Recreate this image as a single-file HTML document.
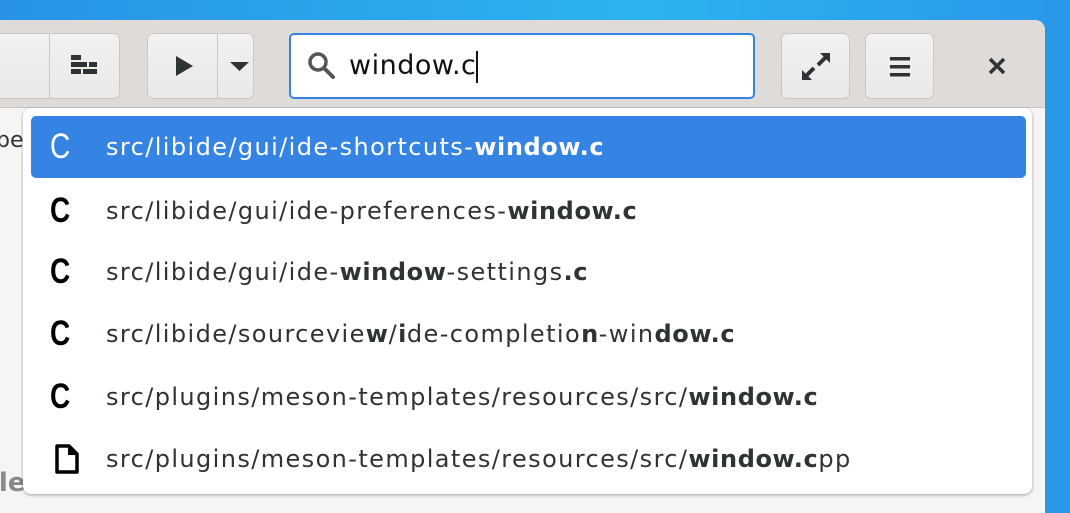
<!DOCTYPE html>
<html><head><meta charset="utf-8"><style>
*{margin:0;padding:0;box-sizing:border-box}
html,body{width:1070px;height:513px;overflow:hidden}
body{position:relative;background:linear-gradient(90deg,#2893e6,#2bb3f0 60%,#2a97ea);font-family:"DejaVu Sans","Liberation Sans",sans-serif}
.win{position:absolute;left:-20px;top:20px;width:1065px;height:493px;background:#f6f5f4;border-radius:0 10px 0 0;overflow:hidden}
.hb{position:absolute;left:0;top:0;right:0;height:88px;background:#dedbd8;border-bottom:1px solid #c8c3be}
.btn{position:absolute;top:13px;height:66px;background:linear-gradient(#f2f1f0,#ebe9e7);border:1px solid #cdc7c2;border-radius:6px}
.entry{position:absolute;left:309px;top:13px;width:466px;height:66px;background:#fff;border:2px solid #3584e4;border-radius:5px}
.pop{position:absolute;left:23px;top:108px;width:1009px;height:386px;background:#fff;border-radius:8px;box-shadow:0 1px 3px rgba(0,0,0,.35)}
.row{position:absolute;left:8px;width:995px;height:62px;font-size:24px;letter-spacing:1.4px;color:#2e3436;line-height:62px}
.row.sel{background:#3584e4;color:#fff;border-radius:5px}
.row .ic{position:absolute;left:19px;top:0;font-size:35px;font-weight:bold;letter-spacing:0;font-family:"Liberation Sans",sans-serif;color:#000;transform:scaleX(.8);transform-origin:left center}
.row.sel .ic{color:#fff;font-weight:normal}
.row .t{position:absolute;left:75px;top:0}
b{font-weight:bold;letter-spacing:0.6px}
</style></head><body>
<div class="win">
<div class="hb">
<div class="btn" style="left:0;width:140px;border-radius:0 6px 6px 0"><div style="position:absolute;left:68px;top:0;width:1px;height:64px;background:#cdc7c2"></div>
<svg style="position:absolute;left:88px;top:20px" width="30" height="24"><g fill="#2e3436"><rect x="2" y="1" width="10" height="5"/><rect x="2" y="8" width="16" height="5"/><rect x="20" y="8" width="8" height="5"/><rect x="2" y="15" width="10" height="5"/><rect x="14" y="15" width="14" height="5"/></g></svg></div>
<div class="btn" style="left:167px;width:107px"><div style="position:absolute;left:69px;top:0;width:1px;height:64px;background:#cdc7c2"></div>
<svg style="position:absolute;left:26px;top:21px" width="20" height="22"><path d="M2 1L19 11L2 21Z" fill="#2e3436"/></svg>
<svg style="position:absolute;left:82px;top:28px" width="20" height="10"><path d="M0 0H19L9.5 9Z" fill="#2e3436"/></svg></div>
<div class="entry">
<svg style="position:absolute;left:16px;top:16px" width="30" height="30"><circle cx="11" cy="11" r="8" stroke="#555" stroke-width="3.5" fill="none"/><path d="M17 17L26 26" stroke="#555" stroke-width="4" stroke-linecap="round"/></svg>
<div style="position:absolute;left:58px;top:14px;font-size:27px;color:#111;line-height:34px;letter-spacing:0.5px">window.c<span style="display:inline-block;width:2px;height:32px;background:#111;vertical-align:middle"></span></div></div>
<div class="btn" style="left:801px;width:69px">
<svg style="position:absolute;left:18px;top:17px" width="32" height="32"><g stroke="#2e3436" stroke-width="4" fill="none"><path d="M5 26L14 17M27 5L18 14"/></g><path d="M2 29V19L12 29Z M30 2V12L20 2Z" fill="#2e3436"/></svg></div>
<div class="btn" style="left:885px;width:69px">
<svg style="position:absolute;left:24px;top:22px" width="22" height="22"><g fill="#2e3436"><rect y="1" width="20" height="3.5"/><rect y="9" width="20" height="3.5"/><rect y="17" width="20" height="3.5"/></g></svg></div>
<svg style="position:absolute;left:1008px;top:37px" width="18" height="18"><path d="M2 2L16 16M16 2L2 16" stroke="#2e3436" stroke-width="3.5"/></svg>
</div>
<div style="position:absolute;left:16px;top:108px;font-size:22px;color:#2e3436">pe</div>
<div style="position:absolute;left:10px;top:448px;font-size:26px;font-weight:bold;color:#888">ile</div>
</div>
<div class="pop">
<div class="row sel" style="top:8px"><span class="ic">C</span><span class="t">src/libide/gui/ide-shortcuts-<b>window.c</b></span></div>
<div class="row" style="top:72px"><span class="ic">C</span><span class="t">src/libide/gui/ide-preferences-<b>window.c</b></span></div>
<div class="row" style="top:133px"><span class="ic">C</span><span class="t">src/libide/gui/ide-<b>window</b>-settings<b>.c</b></span></div>
<div class="row" style="top:195px"><span class="ic">C</span><span class="t">src/libide/sourcevie<b>w</b>/<b>i</b>de-completio<b>n</b>-win<b>dow.c</b></span></div>
<div class="row" style="top:258px"><span class="ic">C</span><span class="t">src/plugins/meson-templates/resources/src/<b>window.c</b></span></div>
<div class="row" style="top:320px"><svg style="position:absolute;left:24px;top:16px" width="24" height="30"><path d="M2 2H14L22 10V28H2Z" stroke="#000" stroke-width="3.5" fill="none" stroke-linejoin="round"/><path d="M13 2V11H22" fill="#000"/></svg><span class="t">src/plugins/meson-templates/resources/src/<b>window.c</b>pp</span></div>
</div>
</body></html>
